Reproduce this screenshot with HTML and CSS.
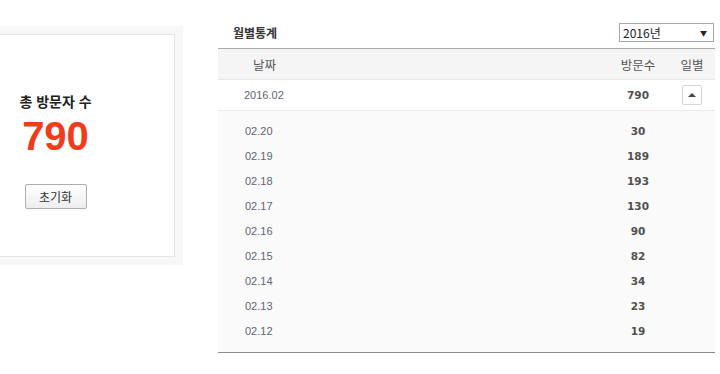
FILE: index.html
```html
<!DOCTYPE html>
<html lang="ko">
<head>
    <meta charset="UTF-8">
    <meta name="viewport" content="width=device-width, initial-scale=1.0">
    <title>방문자 통계</title>
    <link rel="stylesheet" href="styles.css">
</head>
<body>
    <div class="page">
        <section class="summary">
            <div class="summary-box">
                <h2>총 방문자 수</h2>
                <p class="count">790</p>
                <button class="reset-btn">초기화</button>
            </div>
        </section>

        <section class="monthly">
            <div class="monthly-head">
                <h3>월별통계</h3>
                <div class="year-select">2016년<span class="caret">&#9660;</span></div>
            </div>
            <div class="stats">
                <div class="row head-row">
                    <span class="col-date">날짜</span>
                    <span class="col-count">방문수</span>
                    <span class="col-daily">일별</span>
                </div>
                <div class="row month-row">
                    <span class="col-date">2016.02</span>
                    <span class="col-count">790</span>
                    <span class="col-daily"><button class="toggle-btn"><span class="up"></span></button></span>
                </div>
                <ul class="days">
                    <li><span class="col-date">02.20</span><span class="col-count">30</span></li>
                    <li><span class="col-date">02.19</span><span class="col-count">189</span></li>
                    <li><span class="col-date">02.18</span><span class="col-count">193</span></li>
                    <li><span class="col-date">02.17</span><span class="col-count">130</span></li>
                    <li><span class="col-date">02.16</span><span class="col-count">90</span></li>
                    <li><span class="col-date">02.15</span><span class="col-count">82</span></li>
                    <li><span class="col-date">02.14</span><span class="col-count">34</span></li>
                    <li><span class="col-date">02.13</span><span class="col-count">23</span></li>
                    <li><span class="col-date">02.12</span><span class="col-count">19</span></li>
                </ul>
            </div>
        </section>
    </div>
</body>
</html>
```

FILE: styles.css
```css
body {
    margin: 0;
    padding: 0;
    background-color: #fff;
    color: #333;
    font-family: 'Noto Sans CJK KR', 'Liberation Sans', sans-serif;
    overflow: hidden;
}

.page {
    display: flex;
    align-items: flex-start;
    width: 720px;
}

/* left summary card */
.summary {
    flex: none;
    width: 239px;
    margin-top: 26px;
    margin-left: -72px;
    padding: 8px;
    background-color: #f7f7f7;
}

.summary-box {
    display: flex;
    flex-direction: column;
    align-items: center;
    height: 221px;
    background-color: #fff;
    border: 1px solid #e6e6e6;
}

.summary-box h2 {
    margin: 56px 0 0;
    font-size: 14px;
    font-weight: bold;
    line-height: 20px;
    color: #222;
}

.count {
    margin: 5px 0 0;
    font-family: 'Liberation Sans', Arial, sans-serif;
    font-size: 40px;
    font-weight: bold;
    line-height: 40px;
    color: #f03c1a;
}

.reset-btn {
    margin-top: 28px;
    width: 62px;
    height: 25px;
    padding: 0;
    font-family: 'Noto Sans CJK KR', sans-serif;
    font-size: 12px;
    color: #333;
    background: linear-gradient(#fff, #ededed);
    border: 1px solid #adadad;
    border-radius: 2px;
}

/* monthly table */
.monthly {
    flex: none;
    width: 497px;
    margin-left: 35px;
}

.monthly-head {
    display: flex;
    align-items: center;
    justify-content: space-between;
    padding: 23px 1px 6px 15px;
}

.monthly-head h3 {
    margin: 0;
    font-size: 12px;
    font-weight: bold;
    color: #333;
}

.year-select {
    display: flex;
    align-items: center;
    justify-content: space-between;
    box-sizing: border-box;
    width: 95px;
    height: 19px;
    padding: 0 6px 0 3px;
    font-size: 12px;
    color: #222;
    border: 1px solid #a9a9a9;
}

.caret {
    font-size: 7px;
    color: #222;
}

.stats {
    border-top: 1px solid #a8a8a8;
    border-bottom: 1px solid #8c8c8c;
}

.row,
.days li {
    display: grid;
    grid-template-columns: 1fr 62px 46px;
    align-items: center;
}

.head-row {
    height: 30px;
    background-color: #f5f5f5;
    border-bottom: 1px solid #e8e8e8;
    font-size: 12.5px;
    color: #555;
}

.head-row .col-date {
    padding-left: 35px;
}

.col-count,
.col-daily {
    text-align: center;
}

.month-row {
    height: 30px;
    border-bottom: 1px solid #e8e8e8;
}

.col-date {
    padding-left: 26px;
}

.month-row .col-date,
.days .col-date {
    font-family: 'Liberation Sans', Arial, sans-serif;
    font-size: 11px;
    color: #5f6470;
}

.month-row .col-count,
.days .col-count {
    font-family: 'DejaVu Sans', sans-serif;
    font-size: 10.5px;
    font-weight: bold;
    color: #505050;
}

.days .col-date {
    padding-left: 27px;
}

.col-daily {
    display: flex;
    justify-content: center;
}

.toggle-btn {
    display: flex;
    align-items: center;
    justify-content: center;
    width: 20px;
    height: 20px;
    padding: 0;
    margin-left: -1px;
    background-color: #fff;
    border: 1px solid #d6d6d6;
    border-radius: 2px;
}

.up {
    width: 0;
    height: 0;
    border-left: 4px solid transparent;
    border-right: 4px solid transparent;
    border-bottom: 4px solid #444;
}

.days {
    list-style: none;
    margin: 0;
    padding: 7px 0 9px;
    background-color: #fafafa;
}

.days li {
    height: 25px;
}
```
